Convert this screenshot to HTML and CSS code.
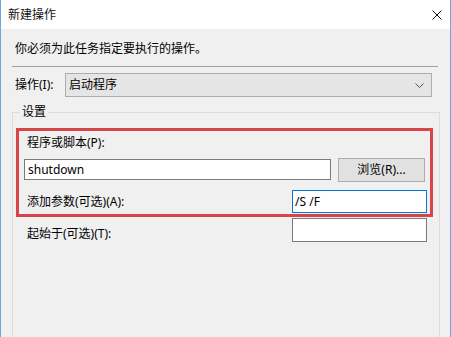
FILE: index.html
```html
<!DOCTYPE html>
<html lang="zh-CN">
<head>
  <meta charset="UTF-8">
  <title>新建操作</title>
  <link rel="stylesheet" href="styles.css">
</head>
<body>

  <div class="window">
    <div class="titlebar">
      <span class="title">新建操作</span>
      <svg class="close" width="10" height="10" viewBox="0 0 10 10">
        <path d="M0.5 0.5 L9.5 9.5 M9.5 0.5 L0.5 9.5" stroke="#111" stroke-width="1" fill="none"/>
      </svg>
    </div>

    <div class="content">
      <div class="intro">你必须为此任务指定要执行的操作。</div>
      <div class="sep"></div>

      <div class="action-row">
        <label class="action-label">操作(I):</label>
        <div class="combo">
          <span>启动程序</span>
          <svg width="9" height="5" viewBox="0 0 9 5">
            <path d="M0.5 0.5 L4.5 4.5 L8.5 0.5" stroke="#555" stroke-width="1" fill="none"/>
          </svg>
        </div>
      </div>

      <fieldset class="group">
        <legend>设置</legend>

        <div class="highlight">
          <div class="field-label">程序或脚本(P):</div>
          <div class="program-row">
            <div class="input program">shutdown</div>
            <button class="browse">浏览(R)...</button>
          </div>
          <div class="arg-row">
            <span class="field-label">添加参数(可选)(A):</span>
            <div class="input short focused">/S /F</div>
          </div>
        </div>

        <div class="start-row">
          <span class="field-label start-label">起始于(可选)(T):</span>
          <div class="input short tall"></div>
        </div>
      </fieldset>
    </div>
  </div>

</body>
</html>
```

FILE: styles.css
```css
html, body {
  margin: 0;
  padding: 0;
}
body {
  font-family: "Noto Sans", "Noto Sans CJK SC", sans-serif;
  font-size: 12px;
  color: #000;
  background: #f0f0f0;
}
.window {
  width: 451px;
  height: 337px;
  box-sizing: border-box;
  border-left: 1px solid #6ea6e2;
  border-right: 1px solid #6ea6e2;
  overflow: hidden;
}
.titlebar {
  height: 29px;
  background: #fff;
  display: flex;
  align-items: center;
  justify-content: space-between;
  padding: 0 8px 0 7px;
  line-height: 14px;
}
.title {
  color: #111;
}
.close {
  display: block;
}
.content {
  background: #f0f0f0;
  padding: 0 10px 0 11px;
  height: 308px;
}
.intro {
  padding: 12px 0 0 3px;
  line-height: 16px;
  height: 16px;
}
.sep {
  margin: 9px 2px 0 0;
  border-top: 1px solid #a0a0a0;
}
.action-row {
  display: flex;
  align-items: center;
  margin-top: 6px;
  height: 24px;
}
.action-label {
  width: 50px;
  padding-left: 3px;
  line-height: 14px;
}
.combo {
  flex: 1;
  margin-right: 8px;
  height: 24px;
  box-sizing: border-box;
  border: 1px solid #adadad;
  background: #e5e5e5;
  display: flex;
  align-items: center;
  justify-content: space-between;
  padding: 0 7px 0 3px;
  line-height: 14px;
}
.combo svg {
  display: block;
}
.group {
  margin: 8px 0 0 0;
  padding: 0;
  border: 1px solid #dcdcdc;
  min-height: 240px;
}
.group legend {
  margin-left: 7px;
  padding: 0 2px;
  line-height: 14px;
}
.highlight {
  margin: 9px 6px 0 3px;
  border: 3px solid #d6454a;
  padding: 5px 0 1px 0;
}
.field-label {
  padding-left: 8px;
  line-height: 14px;
}
.program-row {
  display: flex;
  align-items: flex-start;
  margin-top: 8px;
  padding-left: 5px;
}
.input {
  box-sizing: border-box;
  background: #fff;
  border: 1px solid #7a7a7a;
  line-height: 14px;
  display: flex;
  align-items: center;
}
.program {
  width: 307px;
  height: 21px;
  margin-top: 1px;
  padding-left: 3px;
}
.browse {
  margin: 0 0 0 7px;
  width: 87px;
  height: 24px;
  padding: 0;
  background: #e1e1e1;
  border: 1px solid #adadad;
  border-radius: 0;
  font-family: inherit;
  font-size: 12px;
  line-height: 14px;
  color: #000;
}
.arg-row {
  display: flex;
  align-items: center;
  justify-content: space-between;
  margin-top: 8px;
  padding-right: 3px;
}
.short {
  width: 135px;
  height: 23px;
  padding-left: 2px;
}
.focused {
  border-color: #0078d7;
}
.tall {
  height: 24px;
}
.start-row {
  display: flex;
  align-items: flex-start;
  justify-content: space-between;
  margin: 1px 6px 0 3px;
  padding: 0 6px 0 3px;
}
.start-label {
  padding-top: 9px;
}
```
